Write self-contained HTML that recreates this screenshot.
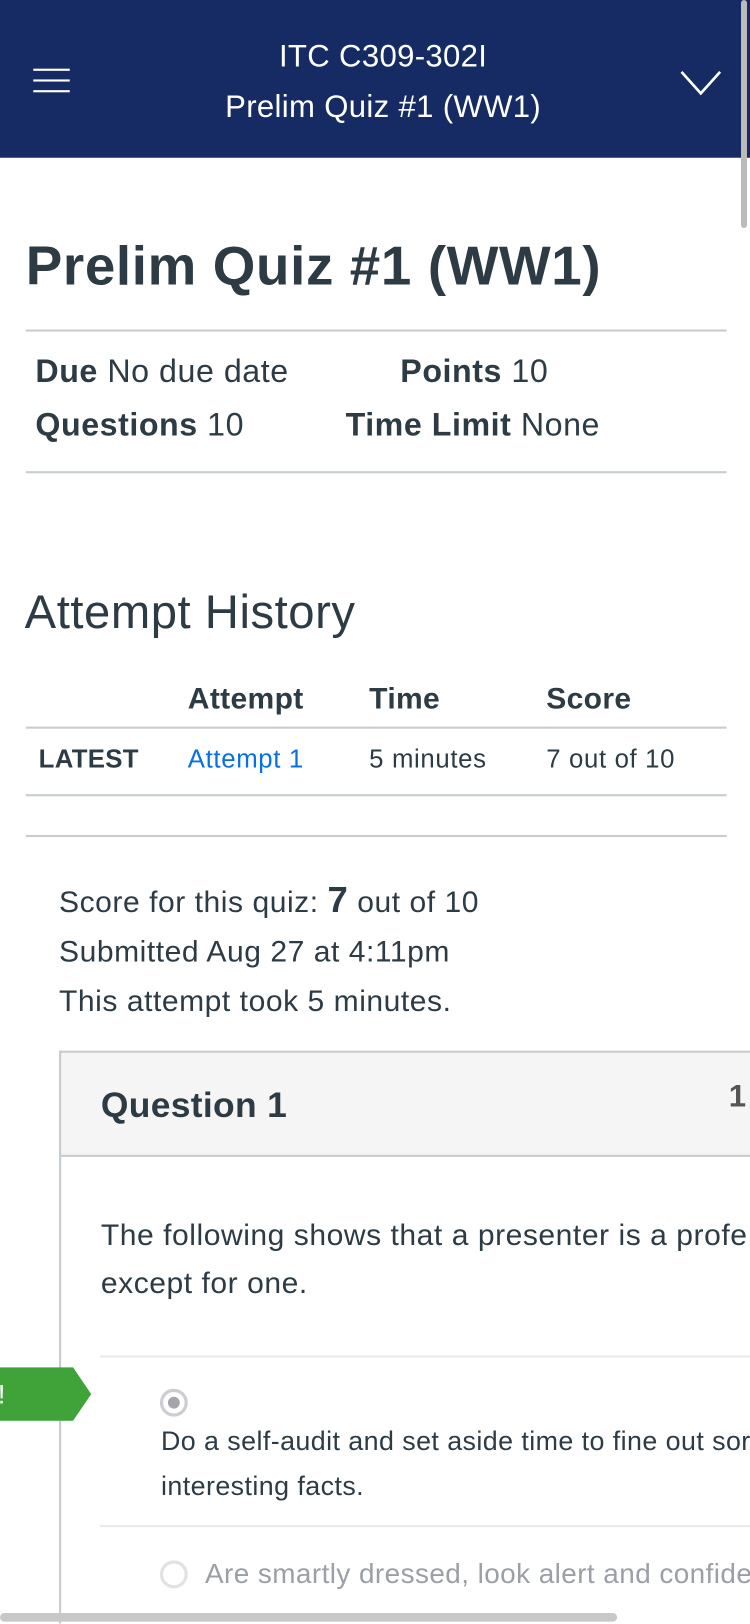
<!DOCTYPE html>
<html><head><style>
body{margin:0;width:750px;height:1624px;overflow:hidden;background:#fff;font-family:"Liberation Sans",sans-serif;color:#2d3b45;position:relative}
.a{position:absolute;white-space:nowrap}
.hr{position:absolute;height:2px;background:#c7cdd1}
#clip{position:absolute;left:0;top:0;width:699px;height:1513px;overflow:hidden;transform:scale(1.0732);transform-origin:0 0}
</style></head><body>
<div id="clip">
<div class="a" style="left:0;top:0;width:750px;height:147px;background:#162b63"></div>
<div class="a" style="left:31px;top:64px;width:34px;height:2px;background:#fff;box-shadow:0 10px 0 #fff,0 20px 0 #fff"></div>
<div class="a" style="left:0;width:714px;top:30px;text-align:center;color:#fff;font-size:29px;line-height:47px;letter-spacing:0.3px">ITC C309-302I<br>Prelim Quiz #1 (WW1)</div>
<svg class="a" style="left:633px;top:64px" width="40" height="26"><path d="M2 3 L20 23 L38 3" stroke="#fff" stroke-width="2.5" fill="none"/></svg>

<div class="a" style="left:24px;top:218px;font-size:51px;font-weight:bold;letter-spacing:0.6px">Prelim Quiz #1 (WW1)</div>
<div class="hr" style="left:24px;top:307px;width:653px"></div>
<div class="a" style="left:33px;top:330px;font-size:30px;letter-spacing:0.5px"><b>Due</b> No due date</div>
<div class="a" style="left:373px;top:330px;font-size:30px;letter-spacing:0.5px"><b>Points</b> 10</div>
<div class="a" style="left:33px;top:380px;font-size:30px;letter-spacing:0.5px"><b>Questions</b> 10</div>
<div class="a" style="left:322px;top:380px;font-size:30px;letter-spacing:0.5px"><b>Time Limit</b> None</div>
<div class="hr" style="left:24px;top:439px;width:653px"></div>

<div class="a" style="left:23px;top:546px;font-size:44px;letter-spacing:0.5px">Attempt History</div>
<div class="a" style="left:175px;top:635px;font-size:28px;font-weight:bold;letter-spacing:0.3px">Attempt</div>
<div class="a" style="left:344px;top:635px;font-size:28px;font-weight:bold;letter-spacing:0.3px">Time</div>
<div class="a" style="left:509px;top:635px;font-size:28px;font-weight:bold;letter-spacing:0.3px">Score</div>
<div class="hr" style="left:24px;top:677px;width:653px"></div>
<div class="a" style="left:36px;top:694px;font-size:24px;font-weight:bold;letter-spacing:0.3px">LATEST</div>
<div class="a" style="left:175px;top:694px;font-size:24px;color:#0770e3;letter-spacing:0.6px">Attempt 1</div>
<div class="a" style="left:344px;top:694px;font-size:24px;letter-spacing:0.6px">5 minutes</div>
<div class="a" style="left:509px;top:694px;font-size:24px;letter-spacing:0.6px">7 out of 10</div>
<div class="hr" style="left:24px;top:740px;width:653px"></div>
<div class="hr" style="left:24px;top:778px;width:653px"></div>

<div class="a" style="left:55px;top:816px;font-size:28px;line-height:46px;letter-spacing:0.5px">Score for this quiz: <b style="font-size:34px">7</b> out of 10<br>Submitted Aug 27 at 4:11pm<br>This attempt took 5 minutes.</div>

<div class="a" style="left:55px;top:979px;width:700px;height:95px;background:#f5f5f5;border:2px solid #c7cdd1;border-right:none"></div>
<div class="a" style="left:55px;top:1074px;width:2px;height:439px;background:#c7cdd1"></div>
<div class="a" style="left:94px;top:1011px;font-size:33px;font-weight:bold;letter-spacing:0.3px">Question 1</div>
<div class="a" style="left:679px;top:1006px;font-size:29px;font-weight:bold;color:#555">1</div>
<div class="a" style="left:94px;top:1128px;font-size:28px;line-height:45px;letter-spacing:0.5px">The following shows that a presenter is a profe<br>except for one.</div>
<div class="a" style="left:93px;top:1263px;width:606px;height:2px;background:#e8eaec"></div>
<svg class="a" style="left:0;top:1274px" width="90" height="50"><polygon points="0,0 68,0 85,25 68,50 0,50" fill="#3fa33a"/><text x="-2" y="34" fill="#fff" font-size="25" font-family="Liberation Sans">!</text></svg>
<svg class="a" style="left:148px;top:1293px" width="30" height="30"><circle cx="14" cy="14" r="11.5" fill="#fff" stroke="#ccccd3" stroke-width="3"/><circle cx="14" cy="14" r="5.5" fill="#a5a5ad"/></svg>
<div class="a" style="left:150px;top:1322px;font-size:25px;line-height:42px;letter-spacing:0.4px">Do a self-audit and set aside time to fine out sor<br>interesting facts.</div>
<div class="a" style="left:93px;top:1421px;width:606px;height:2px;background:#e8eaec"></div>
<svg class="a" style="left:148px;top:1453px" width="30" height="30"><circle cx="14" cy="14" r="11.5" fill="#fff" stroke="#e2e2e4" stroke-width="3"/></svg>
<div class="a" style="left:191px;top:1451px;font-size:26px;color:#9aa0a6;letter-spacing:0.4px">Are smartly dressed, look alert and confident</div>
<div class="a" style="left:0;top:1503px;width:575px;height:8px;background:#c8c8c8;border-radius:4px"></div>
</div>
<div class="a" style="left:741px;top:0;width:6px;height:228px;background:#bbb;border-radius:3px"></div>
</body></html>
